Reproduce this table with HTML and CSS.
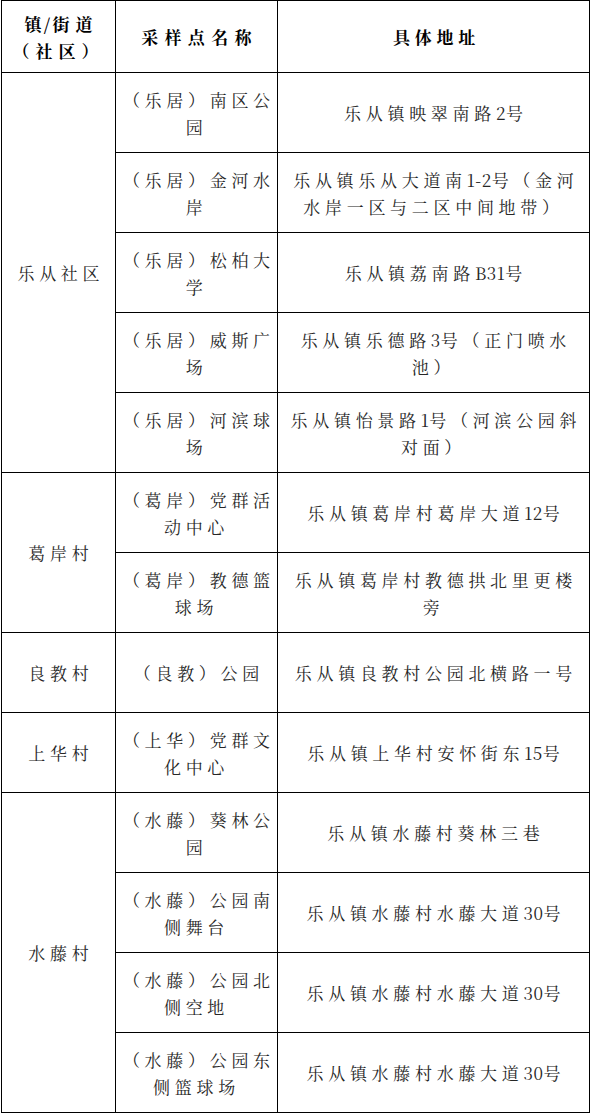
FILE: index.html
```html
<!DOCTYPE html>
<html lang="zh-CN">
<head>
<meta charset="utf-8">
<link rel="stylesheet" href="styles.css">
</head>
<body>
<table class="sites">
  <colgroup>
    <col class="c1"><col class="c2"><col class="c3">
  </colgroup>
  <thead>
    <tr class="head">
      <th><span class="tight">镇/</span>街道<br>（社区）</th>
      <th class="wide">采样点名称</th>
      <th class="narrow">具体地址</th>
    </tr>
  </thead>
  <tbody>
    <tr>
      <td rowspan="5">乐从社区</td>
      <td>（乐居）南区公<br>园</td>
      <td>乐从镇映翠南路<span class="d">2</span>号</td>
    </tr>
    <tr>
      <td>（乐居）金河水<br>岸</td>
      <td>乐从镇乐从大道南<span class="d">1-2</span>号（金河<br>水岸一区与二区中间地带）</td>
    </tr>
    <tr>
      <td>（乐居）松柏大<br>学</td>
      <td>乐从镇荔南路<span class="d">B31</span>号</td>
    </tr>
    <tr>
      <td>（乐居）威斯广<br>场</td>
      <td>乐从镇乐德路<span class="d">3</span>号（正门喷水<br>池）</td>
    </tr>
    <tr>
      <td>（乐居）河滨球<br>场</td>
      <td>乐从镇怡景路<span class="d">1</span>号（河滨公园斜<br>对面）</td>
    </tr>
    <tr>
      <td rowspan="2">葛岸村</td>
      <td>（葛岸）党群活<br>动中心</td>
      <td>乐从镇葛岸村葛岸大道<span class="d">12</span>号</td>
    </tr>
    <tr>
      <td>（葛岸）教德篮<br>球场</td>
      <td>乐从镇葛岸村教德拱北里更楼<br>旁</td>
    </tr>
    <tr>
      <td>良教村</td>
      <td>（良教）公园</td>
      <td>乐从镇良教村公园北横路一号</td>
    </tr>
    <tr>
      <td>上华村</td>
      <td>（上华）党群文<br>化中心</td>
      <td>乐从镇上华村安怀街东<span class="d">15</span>号</td>
    </tr>
    <tr>
      <td rowspan="4">水藤村</td>
      <td>（水藤）葵林公<br>园</td>
      <td>乐从镇水藤村葵林三巷</td>
    </tr>
    <tr>
      <td>（水藤）公园南<br>侧舞台</td>
      <td>乐从镇水藤村水藤大道<span class="d">30</span>号</td>
    </tr>
    <tr>
      <td>（水藤）公园北<br>侧空地</td>
      <td>乐从镇水藤村水藤大道<span class="d">30</span>号</td>
    </tr>
    <tr>
      <td>（水藤）公园东<br>侧篮球场</td>
      <td>乐从镇水藤村水藤大道<span class="d">30</span>号</td>
    </tr>
  </tbody>
</table>
</body>
</html>
```
FILE: styles.css
```css
html, body {
  margin: 0;
  padding: 0;
  background: #fff;
}

body {
  font-family: "SimSun", "Noto Serif CJK SC", "Noto Sans CJK SC", serif;
  color: #262626;
}

.sites {
  border-collapse: collapse;
  table-layout: fixed;
  width: 588px;
  margin: 0 0 0 1px;
}

.c1 { width: 114px; }
.c2 { width: 162px; }
.c3 { width: 312px; }

.sites th,
.sites td {
  border: 1px solid #000;
  padding: 0 1px;
  text-align: center;
  vertical-align: middle;
  font-size: 17px;
  line-height: 27px;
  letter-spacing: 4.7px;
  white-space: nowrap;
  text-indent: 4.7px;
}

.sites th {
  font-weight: 700;
  color: #000;
  letter-spacing: 6px;
  text-indent: 6px;
}

.sites th.wide {
  letter-spacing: 6.3px;
}

.sites th.narrow {
  letter-spacing: 4.7px;
}

.tight {
  letter-spacing: 2px;
}

.head {
  height: 72px;
}

.sites tbody tr {
  height: 80px;
}

.d {
  letter-spacing: 0.5px;
}
```
